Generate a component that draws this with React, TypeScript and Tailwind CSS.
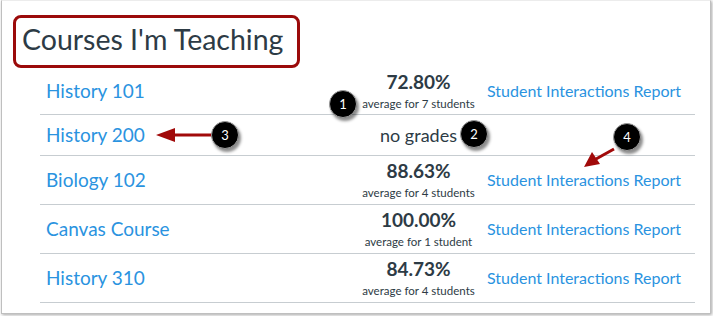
import React from 'react';

interface Course {
  name: string;
  grade?: string;
  note?: string;
  report: boolean;
  height: string;
}

const courses: Course[] = [
  { name: 'History 101', grade: '72.80%', note: 'average for 7 students', report: true, height: 'h-[47px]' },
  { name: 'History 200', report: false, height: 'h-[41px]' },
  { name: 'Biology 102', grade: '88.63%', note: 'average for 4 students', report: true, height: 'h-[49px]' },
  { name: 'Canvas Course', grade: '100.00%', note: 'average for 1 student', report: true, height: 'h-[49px]' },
  { name: 'History 310', grade: '84.73%', note: 'average for 4 students', report: true, height: 'h-[49px]' },
];

const Badge: React.FC<{ n: number; className: string }> = ({ n, className }) => (
  <div
    className={`absolute w-[28px] h-[28px] rounded-full bg-black border border-[#9a9a9a] shadow-[2px_3px_3px_rgba(0,0,0,0.45)] flex items-center justify-center text-white text-[13px] leading-none ${className}`}
  >
    {n}
  </div>
);

export default function App() {
  return (
    <div className="w-[713px] h-[316px] bg-white font-['Lato','Liberation_Sans',sans-serif]">
      <div className="relative ml-[1px] w-[710px] h-[314px] border border-t-[#ececec] border-[#bfbfbf] shadow-[1px_1px_3px_rgba(0,0,0,0.35)] bg-white">
        <div className="mt-[14px] ml-[11px] w-[287px] h-[53px] border-[3px] border-[#9b0a0a] rounded-[8px] flex items-center pl-[6px] pb-[4px]">
          <h2 className="text-[28.5px] leading-none text-[#2d3b45] whitespace-nowrap">Courses I'm Teaching</h2>
        </div>

        <div className="ml-[38px] w-[655px]">
          {courses.map((c) => (
            <div key={c.name} className={`flex items-center border-b border-[#c7cdd1] ${c.height}`}>
              <div className="w-[310px] pl-[6px] text-[19px] text-[#2a93df] whitespace-nowrap">{c.name}</div>
              <div className="w-[137px] flex flex-col items-center text-[#2d3b45] whitespace-nowrap">
                {c.grade ? (
                  <>
                    <span className="text-[19px] leading-[24px] font-bold">{c.grade}</span>
                    <span className="text-[11.5px] leading-[16px] mt-[2px]">{c.note}</span>
                  </>
                ) : (
                  <span className="text-[18px] leading-[22px]">no grades</span>
                )}
              </div>
              {c.report && <div className="text-[16px] text-[#2a93df] whitespace-nowrap">Student Interactions Report</div>}
            </div>
          ))}
        </div>

        <svg className="absolute left-0 top-0 pointer-events-none" width="710" height="314">
          <line x1="170" y1="134" x2="212" y2="134" stroke="#a10a0a" strokeWidth="3" />
          <polygon points="154,134 173,127 173,141" fill="#a10a0a" />
          <line x1="612" y1="148" x2="594" y2="158" stroke="#a10a0a" strokeWidth="3" />
          <polygon points="582,166 590,151 598,163" fill="#a10a0a" />
        </svg>

        <Badge n={1} className="left-[327px] top-[89px]" />
        <Badge n={2} className="left-[458px] top-[119px]" />
        <Badge n={3} className="left-[209px] top-[120px]" />
        <Badge n={4} className="left-[611px] top-[122px]" />
      </div>
    </div>
  );
}
